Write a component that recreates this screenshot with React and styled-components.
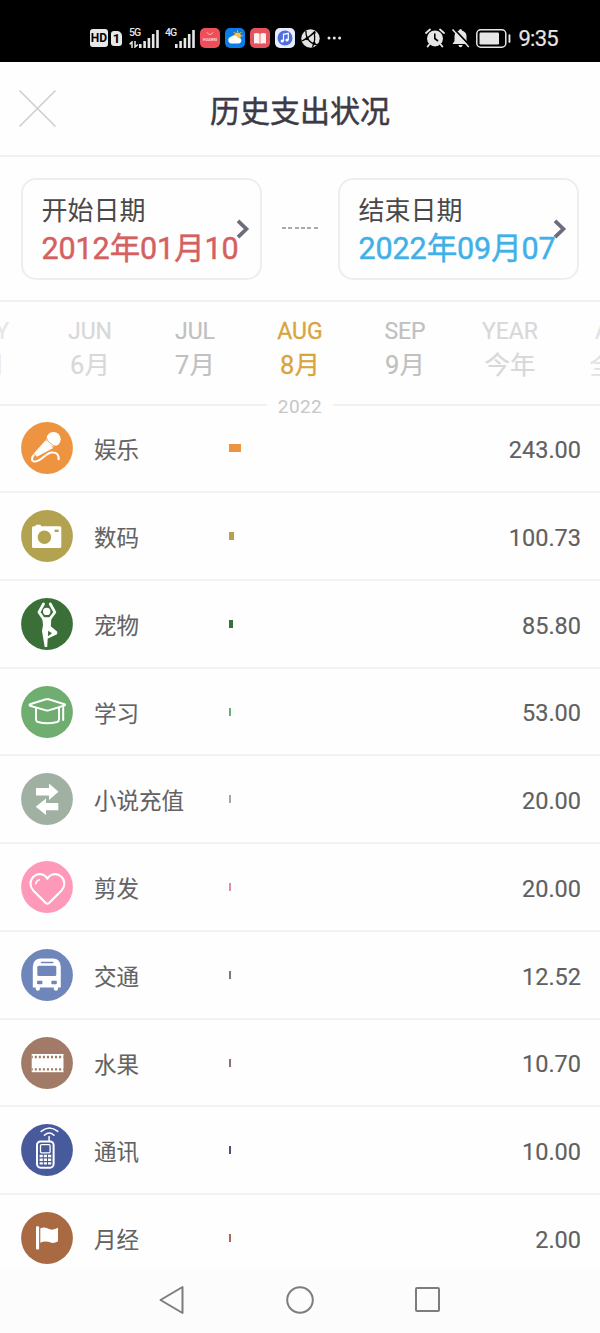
import React from "react";
import styled, { createGlobalStyle } from "styled-components";

const GlobalStyle = createGlobalStyle`
  * { box-sizing: border-box; }
  body {
    margin: 0;
    background: #fefefe;
    font-family: Roboto, "Noto Sans CJK SC", sans-serif;
  }
`;

const Screen = styled.div`
  width: 600px;
  height: 1333px;
  overflow: hidden;
  display: flex;
  flex-direction: column;
  background: #fefefe;
`;

const StatusBar = styled.div`
  flex: none;
  height: 62px;
  padding: 14px 42px 0 90px;
  background: #000;
  color: #e6e6e6;
  display: flex;
  align-items: center;
  justify-content: space-between;
`;

const StatusGroup = styled.div`
  display: flex;
  align-items: center;
  gap: ${(p) => p.$gap}px;
`;

const SignalGroup = styled(StatusGroup)`
  margin-left: 2px;
`;

const HdBadge = styled.span`
  width: ${(p) => p.$w}px;
  height: ${(p) => p.$h}px;
  border-radius: 3px ${(p) => (p.$cut ? 5 : 3)}px 3px 3px;
  background: #e8e8e8;
  color: #000;
  font-size: ${(p) => p.$size}px;
  line-height: ${(p) => p.$h}px;
  font-weight: 700;
  text-align: center;
`;

const Signal = styled.div`
  position: relative;
  width: 30px;
  height: 20px;
  display: flex;
  justify-content: flex-end;
`;

const SignalLabel = styled.span`
  position: absolute;
  left: 0;
  top: 0;
  font-size: 10.5px;
  line-height: 9px;
  font-weight: 500;
  letter-spacing: -1px;
`;

const DataArrows = styled.svg`
  position: absolute;
  left: 0;
  bottom: 0;
`;

const SignalBars = styled.svg`
  align-self: flex-end;
`;

const AppTile = styled.span`
  width: 20px;
  height: 20px;
  border-radius: 5px;
  background: ${(p) => p.$bg};
  display: flex;
  align-items: center;
  justify-content: center;
`;

const Clock = styled.span`
  font-size: 22px;
  line-height: 26px;
  letter-spacing: -0.7px;
  padding-top: 2px;
  -webkit-text-stroke: 0.2px #e6e6e6;
`;

const Header = styled.header`
  flex: none;
  height: 95px;
  padding: 0 18px;
  display: grid;
  grid-template-columns: 60px 1fr 60px;
  align-items: center;
  border-bottom: 2px solid #f1f1f1;
`;

const Title = styled.h1`
  margin: 6px 0 0;
  text-align: center;
  font-size: 30px;
  line-height: 40px;
  font-weight: 400;
  color: #3c3a45;
  -webkit-text-stroke: 0.5px #3c3a45;
`;

const DateRange = styled.section`
  flex: none;
  height: 145px;
  padding: 21px;
  display: flex;
  align-items: flex-start;
  justify-content: space-between;
  border-bottom: 2px solid #f1f1f1;
`;

const DateCard = styled.div`
  position: relative;
  width: 241px;
  height: 102px;
  padding: 14px 0 0 18.5px;
  border: 2px solid #eeeeef;
  border-radius: 15px;
  white-space: nowrap;
`;

const DateLabel = styled.div`
  font-size: 26px;
  line-height: 34px;
  color: #494949;
`;

const DateValue = styled.div`
  margin-top: 2px;
  font-size: 30.5px;
  line-height: 38px;
  letter-spacing: -0.1px;
  color: ${(p) => p.$color};
  -webkit-text-stroke: 0.45px ${(p) => p.$color};
`;

const CardChevron = styled.svg`
  position: absolute;
  right: 10px;
  top: 39px;
`;

const Dashes = styled.div`
  width: 36px;
  height: 1.5px;
  margin-top: 49px;
  background: repeating-linear-gradient(90deg, #aaa 0 4px, transparent 4px 6.3px);
`;

const Months = styled.nav`
  flex: none;
  height: 93px;
  padding-top: 15px;
  display: flex;
  justify-content: center;
  overflow: hidden;
`;

const Month = styled.div`
  flex: none;
  width: 105px;
  text-align: center;
  white-space: nowrap;
  color: ${(p) => p.$color};
  -webkit-text-stroke: ${(p) => (p.$active ? 0.3 : 0.2)}px ${(p) => p.$color};
`;

const MonthEn = styled.div`
  font-size: 23px;
  line-height: 30px;
`;

const MonthZh = styled.div`
  font-size: 25.5px;
  line-height: 32px;
  margin-top: 2px;
`;

const YearDivider = styled.div`
  flex: none;
  height: 20px;
  margin-bottom: -10px;
  display: flex;
  align-items: center;
  gap: 11px;
  font-size: 19px;
  line-height: 20px;
  letter-spacing: 0.4px;
  color: #c6c6c6;

  &::before,
  &::after {
    content: "";
    flex: 1;
    height: 2px;
    background: #f1f1f1;
  }
  span {
    padding-top: 3px;
  }
`;

const List = styled.ul`
  flex: 1;
  min-height: 0;
  margin: 0;
  padding: 0.4px 0 0;
  list-style: none;
  overflow: hidden;
`;

const Row = styled.li`
  height: 87.75px;
  padding: 0 19px 0 21px;
  display: grid;
  grid-template-columns: 52px 135px 1fr auto;
  align-items: center;
  border-bottom: 2px solid #f2f2f2;
`;

const Name = styled.span`
  padding: 4px 0 0 21px;
  font-size: 22.5px;
  line-height: 30px;
  white-space: nowrap;
  color: #636363;
  -webkit-text-stroke: 0.1px #636363;
`;

const BarCell = styled.span`
  display: flex;
  align-items: center;
`;

const Bar = styled.span`
  height: 8px;
  margin-left: 21px;
  background: ${(p) => p.$color};
`;

const Amount = styled.span`
  padding-top: 3.5px;
  font-size: 23.5px;
  line-height: 30px;
  color: #606060;
  -webkit-text-stroke: 0.15px #606060;
`;

const NavBar = styled.footer`
  flex: none;
  height: 66px;
  display: flex;
  align-items: center;
  justify-content: center;
  gap: 100px;
  background: #fcfcfc;
`;

const Bars = () => (
  <SignalBars width="20" height="18" viewBox="0 0 20 18" fill="#e6e6e6">
    <rect x="0" y="14" width="2.6" height="4" />
    <rect x="4.3" y="11" width="2.6" height="7" />
    <rect x="8.6" y="8" width="2.6" height="10" />
    <rect x="12.9" y="4" width="2.6" height="14" />
    <rect x="17.2" y="0" width="2.6" height="18" />
  </SignalBars>
);

const icons = {
  mic: (
    <>
      <circle cx="32.5" cy="17.2" r="7.2" fill="#fff" />
      <path d="M24.6 18.3 32.2 26 16 34.8 12.8 31.6Z" fill="#fff" />
      <path d="M25.3 15.2Q27.3 22.2 35 24.2" fill="none" stroke="#ee9340" strokeWidth=".8" />
      <path d="M13.3 32.5C10 36 10.2 39.8 14 39.5C21 39.3 24 31 31 30.6C36 30.3 38.3 33 37.5 38" fill="none" stroke="#fff" strokeWidth="2" />
    </>
  ),
  camera: (
    <>
      <rect x="11" y="16.3" width="29.3" height="21.6" rx="1.5" fill="#fff" />
      <rect x="14.6" y="14.8" width="5.4" height="3" rx=".8" fill="#fff" />
      <circle cx="23.4" cy="27.2" r="6.7" fill="#b3a250" />
      <rect x="33.6" y="19.6" width="4" height="2.4" fill="#b3a250" />
    </>
  ),
  yoga: (
    <>
      <circle cx="25.7" cy="13.4" r="3.7" fill="#fff" />
      <path d="M22.5 6 18 14.2 23 21.5M29.3 6 33.8 14.2 28.5 21.5" fill="none" stroke="#fff" strokeWidth="2.8" strokeLinejoin="round" strokeLinecap="round" />
      <path d="M21.2 19.2H30.4L29.8 28.2 36.3 33.8 36 36.2 27 40.4 26.2 38.8 31 35.3 27.2 32.8 26.2 49H23.7L21 33 22 27Z" fill="#fff" />
    </>
  ),
  cap: (
    <g fill="none" stroke="#fff" strokeWidth="2" strokeLinejoin="round" strokeLinecap="round">
      <path d="M9 18.2 25 13.3Q26.3 13 27.6 13.3L43.5 18.2Q44.5 18.8 43.5 19.5L27.6 24.4Q26.3 24.7 25 24.4L9 19.7Q8.2 19 9 18.2Z" />
      <path d="M15 22V33.5Q15 35.4 17 36Q26.3 38.6 36 36Q38 35.4 38 33.5V22M42.2 22V34" />
    </g>
  ),
  arrows: (
    <path d="M15 15H28V10.5L37.5 18.7 28 27V22.5H15ZM37.3 30H25V25.5L14.7 33.7 25 42V37.3H37.3Z" fill="#fff" />
  ),
  heart: (
    <g fill="none" stroke="#fff" strokeWidth="2.1" strokeLinecap="round" strokeLinejoin="round">
      <path d="M26.4 17.8C23.5 12.2 16.5 11.8 12.4 15.8C8.4 19.8 8.6 25.4 12.2 29.4L24.7 42Q26.4 43.5 28.1 42L40.6 29.4C44.2 25.4 44.4 19.8 40.4 15.8C36.3 11.8 29.3 12.2 26.4 17.8Z" />
      <path d="M14.8 22.8Q15.2 19.6 18.4 18.8" strokeWidth="1.5" />
    </g>
  ),
  bus: (
    <>
      <path d="M11.8 38.5V18Q12 9.5 20 9.5H32Q39.5 9.5 39.8 18V38.5H37V40Q37 41.7 35 41.7T32.8 40V38.5H18.9V40Q18.9 41.7 16.8 41.7T14.7 40V38.5Z" fill="#fff" />
      <g fill="#6e86b9">
        <rect x="19.8" y="12.7" width="12.7" height="1.6" rx=".8" />
        <rect x="16.3" y="16.7" width="19" height="10.4" rx="1.5" />
        <rect x="16" y="31.8" width="5.4" height="3.5" rx=".8" />
        <rect x="30.4" y="31.8" width="5.4" height="3.5" rx=".8" />
      </g>
    </>
  ),
  film: (
    <>
      <rect x="10.7" y="17" width="31.8" height="18.2" fill="#fff" />
      <path d="M10.7 20H42.5M10.7 32.3H42.5" stroke="#a17a68" strokeWidth="2.3" strokeDasharray="2.1 1.95" strokeDashoffset="1" />
    </>
  ),
  phone: (
    <>
      <rect x="16" y="17.4" width="16.6" height="26.3" rx="3.6" fill="none" stroke="#fff" strokeWidth="2" />
      <rect x="19.5" y="20.6" width="9.6" height="8.2" rx="1" fill="none" stroke="#fff" strokeWidth="1.3" />
      <path d="M28.1 12.5V17M23.4 11.2Q28.2 6.8 33 11.2M20.2 7.4Q28.3 .6 36.8 7.4" fill="none" stroke="#fff" strokeWidth="1.5" strokeLinecap="round" />
      <path d="M18.6 32H30.2M18.6 35.7H30.2M18.6 39.4H30.2" stroke="#fff" strokeWidth="2.4" strokeDasharray="3.2 1" />
    </>
  ),
  flag: (
    <>
      <rect x="15" y="14.2" width="3.1" height="23.2" rx="1" fill="#fff" />
      <path d="M19.3 16.6C24 13.8 27 17.8 31 17.7Q34 17.5 37 15.8V29.3C33 31.7 30 31 27.5 29.8Q23 28.6 19.3 30.8Z" fill="#fff" />
    </>
  ),
};

const CategoryIcon = ({ kind, color }) => (
  <svg width="52" height="52" viewBox="0 0 52 52">
    <circle cx="26" cy="26" r="25.9" fill={color} />
    {icons[kind]}
  </svg>
);

const rows = [
  { kind: "mic", color: "#ee9340", name: "娱乐", amount: "243.00", bar: 12 },
  { kind: "camera", color: "#b3a250", name: "数码", amount: "100.73", bar: 5 },
  { kind: "yoga", color: "#3a7038", name: "宠物", amount: "85.80", bar: 4 },
  { kind: "cap", color: "#6fad70", name: "学习", amount: "53.00", bar: 2 },
  { kind: "arrows", color: "#a0b1a4", name: "小说充值", amount: "20.00", bar: 1.5, tint: "#a5a5ab" },
  { kind: "heart", color: "#ff99b9", name: "剪发", amount: "20.00", bar: 1.5, tint: "#dd91a5" },
  { kind: "bus", color: "#6e86b9", name: "交通", amount: "12.52", bar: 1.5, tint: "#74748a" },
  { kind: "film", color: "#a17a68", name: "水果", amount: "10.70", bar: 1.5, tint: "#85716f" },
  { kind: "phone", color: "#475a9c", name: "通讯", amount: "10.00", bar: 1.5, tint: "#4e4d85" },
  { kind: "flag", color: "#a96a43", name: "月经", amount: "2.00", bar: 1.5, tint: "#a96a53" },
];

const months = [
  { en: "MAY", zh: "5月", color: "#e6e6e6" },
  { en: "JUN", zh: "6月", color: "#d8d8d8" },
  { en: "JUL", zh: "7月", color: "#c0c0c0" },
  { en: "AUG", zh: "8月", color: "#d8a43c", active: true },
  { en: "SEP", zh: "9月", color: "#c0c0c0" },
  { en: "YEAR", zh: "今年", color: "#d8d8d8" },
  { en: "ALL", zh: "全部", color: "#e2e2e2" },
];

const Chevron = () => (
  <CardChevron width="14" height="20" viewBox="0 0 14 20" fill="none" stroke="#6b6d7c" strokeWidth="3.8">
    <path d="M2 1.8 10.4 10 2 18.2" />
  </CardChevron>
);

export default function App() {
  return (
    <Screen>
      <GlobalStyle />
      <StatusBar>
        <StatusGroup $gap={5}>
          <StatusGroup $gap={3}>
            <HdBadge $w={18} $h={18} $size={12}>HD</HdBadge>
            <HdBadge $w={11} $h={15} $size={13} $cut>1</HdBadge>
          </StatusGroup>
          <SignalGroup $gap={6}>
            <Signal>
              <SignalLabel>5G</SignalLabel>
              <DataArrows width="10" height="7" viewBox="0 0 10 7" fill="none" stroke="#e6e6e6" strokeWidth="1.5">
                <path d="M3 7V1L.6 3.4M6 0V6L8.8 3.6" />
              </DataArrows>
              <Bars />
            </Signal>
            <Signal>
              <SignalLabel>4G</SignalLabel>
              <Bars />
            </Signal>
          </SignalGroup>
          <AppTile $bg="#ee4f58">
            <svg width="20" height="20" viewBox="0 0 20 20">
              <path d="M7 4.3Q10 8.8 13 4.3" fill="none" stroke="#ffc0b5" strokeWidth="1" />
              <text x="10" y="13" textAnchor="middle" fontSize="3.9" fontWeight="700" fill="#ffd8cf">HUAWEI</text>
            </svg>
          </AppTile>
          <AppTile $bg="#0c7ce8">
            <svg width="16" height="16" viewBox="0 0 16 16">
              <circle cx="10.5" cy="5.8" r="3.4" fill="#ffc23c" />
              <path d="M10.5.5V2M15.8 5.8H14.3M14.3 2 13.3 3M6.7 2 7.7 3" stroke="#ffc23c" />
              <path d="M4.2 13.5A3.4 3.4 0 0 1 4 6.8 4 4 0 0 1 10.8 8 2.8 2.8 0 1 1 11.5 13.5Z" fill="#fff" />
            </svg>
          </AppTile>
          <AppTile $bg="#e65360">
            <svg width="14" height="13" viewBox="0 0 14 13">
              <path d="M1 1.5Q4.5.5 6.6 1.8V11.8Q4 10.8 1 11.5ZM7.4 1.8Q9.5.5 13 1.5V11.5Q10 10.8 7.4 11.8Z" fill="#fff1ee" />
            </svg>
          </AppTile>
          <StatusGroup $gap={6}>
            <AppTile $bg="#e8edff">
              <svg width="16" height="16" viewBox="0 0 16 16">
                <circle cx="8" cy="8" r="7.5" fill="#4e6fdc" />
                <path d="M6.5 11V4.3L11.3 3.3V10" fill="none" stroke="#fff" strokeWidth="1.2" />
                <circle cx="5.2" cy="11" r="1.6" fill="#fff" />
                <circle cx="10" cy="10" r="1.6" fill="#fff" />
              </svg>
            </AppTile>
            <svg width="19" height="19" viewBox="0 0 19 19">
              <circle cx="9.5" cy="9.5" r="9.2" fill="#e4e4e4" />
              <path d="M5 2Q4.5 8 9 12.5T17 15M1 12Q9 8 14 2.5M13 3.5Q15 11 11.5 18" fill="none" stroke="#000" strokeWidth="1.3" />
              <circle cx="6" cy="9.6" r="1.6" />
              <circle cx="13.4" cy="3.8" r="1.3" />
              <circle cx="13" cy="14.3" r="1.6" />
            </svg>
            <svg width="16" height="4" viewBox="0 0 16 4" fill="#e6e6e6">
              <circle cx="3" cy="2" r="1.5" />
              <circle cx="8.3" cy="2" r="1.5" />
              <circle cx="13.6" cy="2" r="1.5" />
            </svg>
          </StatusGroup>
        </StatusGroup>
        <StatusGroup $gap={6}>
          <svg width="20" height="20" viewBox="0 0 20 20">
            <circle cx="10" cy="10.4" r="8" fill="#e6e6e6" />
            <path d="M1 5 5 1.5M19 5 15 1.5M4.2 16.5 2.7 18.6M15.8 16.5 17.3 18.6" stroke="#e6e6e6" strokeWidth="1.8" strokeLinecap="round" />
            <path d="M9.8 5.6V10.5L13 13" fill="none" stroke="#000" strokeWidth="1.6" />
          </svg>
          <svg width="19" height="20" viewBox="0 0 19 20">
            <path d="M9.5 1Q10.8 1 11 2.6Q15.5 4 15.5 8.5V13L17.5 16H1.5L3.5 13V8.5Q3.5 4 8 2.6Q8.2 1 9.5 1ZM7.3 17H11.7Q11 19.2 9.5 19.2T7.3 17Z" fill="#e6e6e6" />
            <path d="M3 .8 19 17.8" stroke="#000" strokeWidth="1.8" />
            <path d="M1.5 1.6 17.8 19" stroke="#e6e6e6" strokeWidth="1.5" />
          </svg>
          <svg width="36" height="19" viewBox="0 0 36 19">
            <rect x=".8" y=".8" width="29" height="17.4" rx="4" fill="none" stroke="#e6e6e6" strokeWidth="1.5" />
            <rect x="3.5" y="3.6" width="19.5" height="11.8" rx="1.2" fill="#e6e6e6" />
            <rect x="32.5" y="5.2" width="1.9" height="8.6" rx=".9" fill="#e6e6e6" />
          </svg>
          <Clock>9:35</Clock>
        </StatusGroup>
      </StatusBar>

      <Header>
        <svg width="39" height="39" viewBox="0 0 39 39" stroke="#cdcdcd" strokeWidth="1.5">
          <path d="M1.5 1.5 37.5 37.5M37.5 1.5 1.5 37.5" />
        </svg>
        <Title>历史支出状况</Title>
      </Header>

      <DateRange>
        <DateCard>
          <DateLabel>开始日期</DateLabel>
          <DateValue $color="#d46060">2012年01月10</DateValue>
          <Chevron />
        </DateCard>
        <Dashes />
        <DateCard>
          <DateLabel>结束日期</DateLabel>
          <DateValue $color="#3fb0e8">2022年09月07</DateValue>
          <Chevron />
        </DateCard>
      </DateRange>

      <Months>
        {months.map((m) => (
          <Month key={m.en} $color={m.color} $active={m.active}>
            <MonthEn>{m.en}</MonthEn>
            <MonthZh>{m.zh}</MonthZh>
          </Month>
        ))}
      </Months>

      <YearDivider>
        <span>2022</span>
      </YearDivider>

      <List>
        {rows.map((r) => (
          <Row key={r.name}>
            <CategoryIcon kind={r.kind} color={r.color} />
            <Name>{r.name}</Name>
            <BarCell>
              <Bar $color={r.tint || r.color} style={{ width: r.bar }} />
            </BarCell>
            <Amount>{r.amount}</Amount>
          </Row>
        ))}
      </List>

      <NavBar>
        <svg width="28" height="30" viewBox="0 0 28 30" fill="none" stroke="#7d7d7d" strokeWidth="2" strokeLinejoin="round">
          <path d="M2.5 15 24.5 2V28Z" />
        </svg>
        <svg width="28" height="28" viewBox="0 0 28 28" fill="none" stroke="#7d7d7d" strokeWidth="2">
          <circle cx="14" cy="14" r="12.8" />
        </svg>
        <svg width="28" height="28" viewBox="0 0 28 28" fill="none" stroke="#7d7d7d" strokeWidth="2">
          <rect x="2" y="2" width="23" height="23" rx="1" />
        </svg>
      </NavBar>
    </Screen>
  );
}
